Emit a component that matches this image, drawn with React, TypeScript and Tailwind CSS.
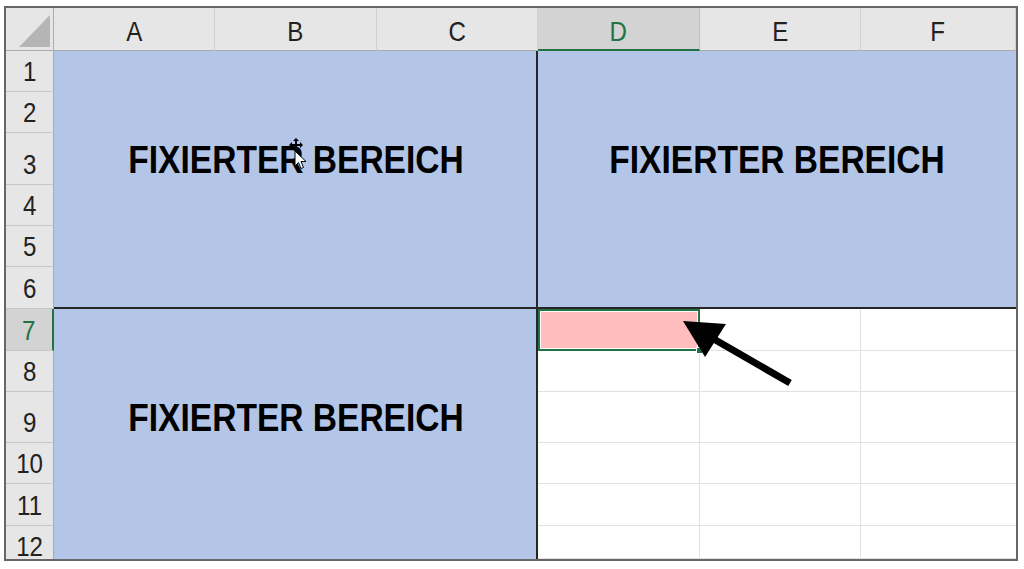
import React from "react";

const font = "font-['Liberation_Sans',Arial,sans-serif]";

const columns = [
  { label: "A", active: false },
  { label: "B", active: false },
  { label: "C", active: false },
  { label: "D", active: true },
  { label: "E", active: false },
  { label: "F", active: false },
];

const rows = [
  { n: 1, pos: "row-start-2" },
  { n: 2, pos: "row-start-3" },
  { n: 3, pos: "row-start-4" },
  { n: 4, pos: "row-start-5" },
  { n: 5, pos: "row-start-6" },
  { n: 6, pos: "row-start-7" },
  { n: 7, pos: "row-start-8", active: true },
  { n: 8, pos: "row-start-9" },
  { n: 9, pos: "row-start-10" },
  { n: 10, pos: "row-start-11" },
  { n: 11, pos: "row-start-12" },
  { n: 12, pos: "row-start-13", cut: true },
];

const whiteCols = ["col-start-5", "col-start-6", "col-start-7"];
const whiteRows = [
  "row-start-8",
  "row-start-9",
  "row-start-10",
  "row-start-11",
  "row-start-12",
  "row-start-13",
];

const frozen = [
  {
    area: "col-start-2 col-span-3 row-start-2 row-span-6",
    border: "border-r-2 border-b-2",
  },
  { area: "col-start-5 col-span-3 row-start-2 row-span-6", border: "border-b-2" },
  { area: "col-start-2 col-span-3 row-start-8 row-span-6", border: "border-r-2" },
];

const labels = [
  "col-start-2 col-span-3 row-start-4",
  "col-start-5 col-span-3 row-start-4",
  "col-start-2 col-span-3 row-start-10",
];

function HeaderText({ children }: { children: React.ReactNode }) {
  return (
    <span className="inline-block scale-x-[0.86] text-[28px] leading-[28px]">
      {children}
    </span>
  );
}

export default function App() {
  return (
    <div className={`relative w-[1024px] h-[569px] bg-white pl-[4px] pt-[6px] ${font}`}>
      <div className="w-[1014px] h-[555px] border-2 border-[#676767]">
        <div className="grid h-full grid-cols-[48px_161px_162px_161px_162px_161px_155px] grid-rows-[43px_41px_41px_52px_41px_41px_42px_42px_41px_51px_41px_42px_33px] text-[#222]">
          {/* corner */}
          <div className="col-start-1 row-start-1 bg-[#e6e6e6] border-r border-b border-[#ababab] flex items-end justify-end pr-[3px] pb-[3px]">
            <svg width="31" height="32" viewBox="0 0 31 32">
              <polygon points="0,32 31,32 31,0" fill="#b5b5b5" />
            </svg>
          </div>

          {/* column headers */}
          {columns.map((c) =>
            c.active ? (
              <div
                key={c.label}
                className="row-start-1 bg-[#d3d3d3] border-r border-[#bdbdbd] border-b-2 border-b-[#217346] flex items-end justify-center pb-[3px] text-[#217346]"
              >
                <HeaderText>{c.label}</HeaderText>
              </div>
            ) : (
              <div
                key={c.label}
                className="row-start-1 bg-[#e6e6e6] border-r border-[#d0d0d0] border-b border-b-[#ababab] flex items-end justify-center pb-[4px]"
              >
                <HeaderText>{c.label}</HeaderText>
              </div>
            ),
          )}

          {/* row headers */}
          {rows.map((r) =>
            r.active ? (
              <div
                key={r.n}
                className={`${r.pos} col-start-1 bg-[#d3d3d3] border-b border-[#c6c6c6] border-r-2 border-r-[#217346] flex items-end justify-center pb-[5px] text-[#217346]`}
              >
                <HeaderText>{r.n}</HeaderText>
              </div>
            ) : r.cut ? (
              <div
                key={r.n}
                className={`${r.pos} col-start-1 bg-[#e6e6e6] border-r border-r-[#ababab] overflow-hidden flex items-start justify-center pt-[7px]`}
              >
                <HeaderText>{r.n}</HeaderText>
              </div>
            ) : (
              <div
                key={r.n}
                className={`${r.pos} col-start-1 bg-[#e6e6e6] border-b border-[#c6c6c6] border-r border-r-[#ababab] flex items-end justify-center pb-[5px]`}
              >
                <HeaderText>{r.n}</HeaderText>
              </div>
            ),
          )}

          {/* frozen panes */}
          {frozen.map((f) => (
            <div key={f.area} className={`${f.area} ${f.border} bg-[#b4c6e7] border-[#262626]`} />
          ))}

          {labels.map((l) => (
            <div key={l} className={`${l} flex items-center justify-center`}>
              <span className="inline-block scale-x-[0.86] text-[39px] leading-[39px] font-bold text-black whitespace-nowrap">
                FIXIERTER BEREICH
              </span>
            </div>
          ))}

          {/* scrolling area */}
          {whiteRows.map((r, ri) =>
            whiteCols.map((c, ci) =>
              ri === 0 && ci === 0 ? (
                <div
                  key={r + c}
                  className={`${r} ${c} relative z-10 bg-[#ffbdbd] border-2 border-[#217346] shadow-[inset_0_0_0_1px_#fff]`}
                >
                  <div className="absolute -right-[5px] -bottom-[5px] w-[7px] h-[7px] bg-[#217346] border border-white" />
                </div>
              ) : (
                <div
                  key={r + c}
                  className={`${r} ${c} bg-white border-b border-[#e1e1e1] ${ci < 2 ? "border-r" : ""}`}
                />
              ),
            ),
          )}
        </div>
      </div>

      {/* overlay: arrow and mouse cursor */}
      <svg
        className="absolute inset-0 pointer-events-none z-20"
        width="1024"
        height="569"
        viewBox="0 0 1024 569"
      >
        <line x1="712" y1="338" x2="790" y2="383" stroke="#000" strokeWidth="7" />
        <polygon points="683,321 726,324 705,357" fill="#000" />
        <path
          d="M296 138 l3 3 h-2 v3 h3 v-2 l3 3 l-3 3 v-2 h-3 v3 h2 l-3 3 l-3 -3 h2 v-3 h-3 v2 l-3 -3 l3 -3 v2 h3 v-3 h-2 z"
          fill="#000"
        />
        <path
          d="M295 151 L295 166 L298.5 162.5 L301 168.5 L303.5 167.5 L301 161.5 L306 161.5 Z"
          fill="#fff"
          stroke="#000"
          strokeWidth="1"
        />
      </svg>
    </div>
  );
}
